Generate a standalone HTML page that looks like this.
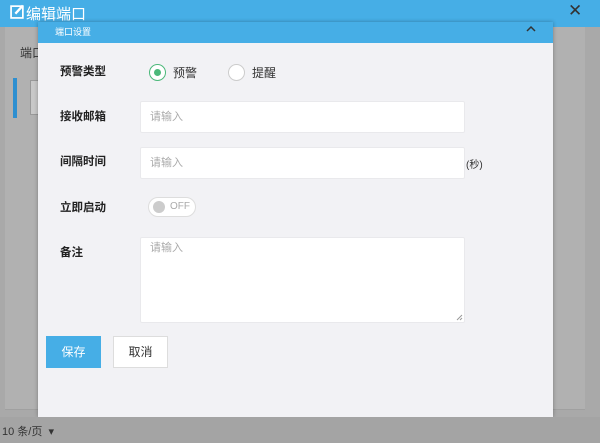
<!DOCTYPE html>
<html><head><meta charset="utf-8"><style>
*{margin:0;padding:0;box-sizing:border-box}
body{width:600px;height:443px;overflow:hidden;background:#a9a9a9;font-family:"Liberation Sans","Noto Sans CJK SC",sans-serif;position:relative;font-size:12px;color:#333}
.abs{position:absolute}
.top{left:0;top:0;width:600px;height:27px;background:#46aee6;color:#fff}
.card{left:5px;top:27px;width:580px;height:383px;background:#b1b1b1;border-bottom:1px solid #a0a0a0}
.modal{left:38px;top:22px;width:515px;height:395px;background:#f2f2f5;box-shadow:0 0 4px rgba(0,0,0,.3)}
.mh{left:0;top:0;width:515px;height:21px;background:#46aee6}
.lbl{left:22px;font-size:11.5px;color:#222;font-weight:600}
.inp{left:102px;width:325px;height:32px;background:#fff;border:1px solid #e9e9ec;border-radius:2px;color:#aaa;font-size:11px;padding-left:9px;line-height:30px}
.bot{left:0;top:417px;width:600px;height:26px;background:#a4a4a4}
</style></head><body>
<div class="abs card"></div>
<div class="abs" style="left:20px;top:44px;color:#333;font-size:12px">端口</div>
<div class="abs" style="left:13px;top:78px;width:4px;height:40px;background:#2e8fd0"></div>
<div class="abs" style="left:30px;top:80px;width:10px;height:35px;background:#c8c8c8;border:1px solid #999"></div>
<div class="abs top">
 <svg class="abs" style="left:10px;top:4px" width="15" height="15" viewBox="0 0 14 14"><rect x="1" y="2" width="11" height="11" fill="none" stroke="#fff" stroke-width="1.6"/><path d="M5 9 L12 1.5" stroke="#fff" stroke-width="2.2"/></svg>
 <div class="abs" style="left:26px;top:3px;font-size:15px">编辑端口</div>
 <div class="abs" style="left:568px;top:1px;font-size:17px;color:#333">✕</div>
</div>
<div class="abs modal">
 <div class="abs mh"><div class="abs" style="left:17px;top:3px;color:#fff;font-size:9px">端口设置</div>
 <svg class="abs" style="left:487px;top:2px" width="12" height="8"><path d="M2 7 L6 3 L10 7" fill="none" stroke="#333" stroke-width="1.5"/></svg></div>
 <div class="abs lbl" style="top:41px">预警类型</div>
 <div class="abs" style="left:111px;top:42px;width:17px;height:17px;border:1px solid #4cb87a;border-radius:50%;background:#fff"><div style="margin:4px;width:7px;height:7px;border-radius:50%;background:#4cb87a"></div></div>
 <div class="abs" style="left:135px;top:42px;font-size:12px">预警</div>
 <div class="abs" style="left:190px;top:42px;width:17px;height:17px;border:1px solid #ccc;border-radius:50%;background:#fff"></div>
 <div class="abs" style="left:214px;top:42px;font-size:12px">提醒</div>
 <div class="abs lbl" style="top:86px">接收邮箱</div>
 <div class="abs inp" style="top:79px">请输入</div>
 <div class="abs lbl" style="top:131px">间隔时间</div>
 <div class="abs inp" style="top:125px">请输入</div>
 <div class="abs" style="left:428px;top:134px;font-size:10px;color:#333">(秒)</div>
 <div class="abs lbl" style="top:177px">立即启动</div>
 <div class="abs" style="left:110px;top:175px;width:48px;height:20px;border:1px solid #ddd;border-radius:10px;background:#fff"><div class="abs" style="left:4px;top:3px;width:12px;height:12px;border-radius:50%;background:#ccc"></div><div class="abs" style="left:21px;top:3px;font-size:10px;color:#aaa">OFF</div></div>
 <div class="abs lbl" style="top:222px">备注</div>
 <div class="abs inp" style="top:215px;height:86px;line-height:20px">请输入
  <svg class="abs" style="right:1px;bottom:1px" width="7" height="7"><path d="M1 6 L6 1 M4 6 L6 4" stroke="#999" stroke-width="1"/></svg></div>
 <div class="abs" style="left:8px;top:314px;width:55px;height:32px;background:#46aee6;color:#fff;text-align:center;line-height:32px;font-size:12px">保存</div>
 <div class="abs" style="left:75px;top:314px;width:55px;height:32px;background:#fff;border:1px solid #ddd;text-align:center;line-height:30px;font-size:12px">取消</div>
</div>
<div class="abs bot"><div class="abs" style="left:2px;top:6px;font-size:11px;color:#333">10 条/页 &nbsp;▾</div></div>
</body></html>
